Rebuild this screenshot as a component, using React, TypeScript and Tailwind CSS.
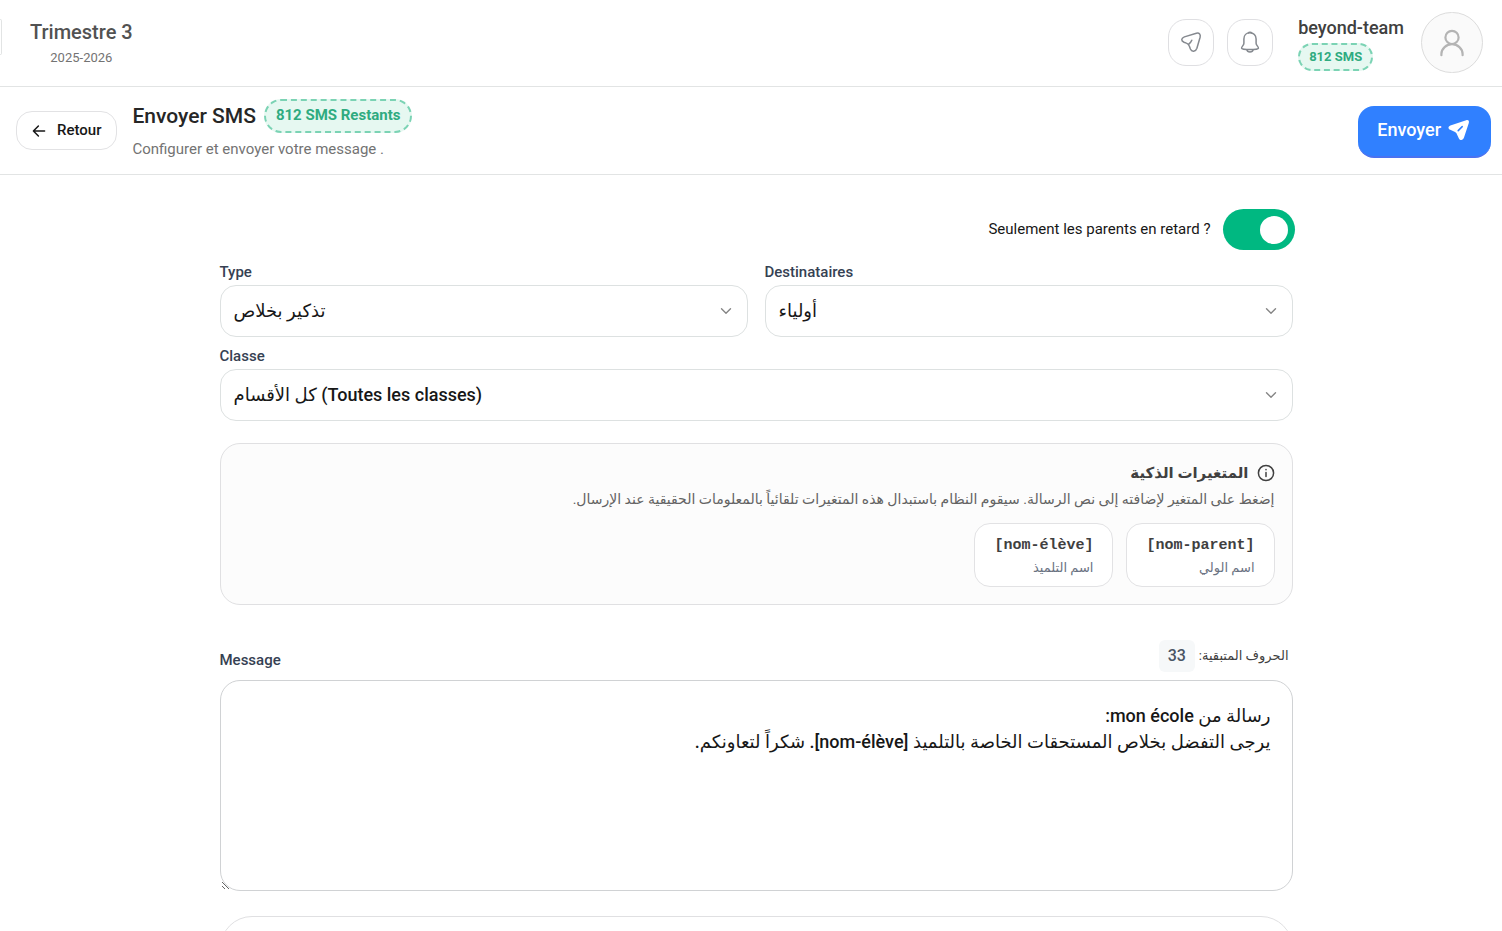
import React, { useState } from "react";

const PLANE_OUTLINE =
  "M17.9 17.2L21.1 6.2C21.8 3.3 20.4 1.7 17.4 2.2L5.4 5.9C2 7.2 1.9 9.8 5 11.2L7.4 12.1C8.9 12.6 9.8 13.5 10.3 15L11.4 18C12.8 21.2 16.7 20.8 17.9 17.2Z";

const PLANE_SOLID =
  "M17 19.6L21.8 5C22.4 2.8 21.4 1.7 19.2 2.2L3.4 7.4C0.9 8.4 0.9 10.6 3.2 11.8L7.6 13.8C8.8 14.3 9.4 15 9.9 16.2L11.9 20.4C13.2 22.9 16.1 22.5 17 19.6Z";

function PlaneOutline() {
  return (
    <svg viewBox="0 0 24 24" className="size-6" fill="none" stroke="currentColor" strokeWidth="1.5" strokeLinecap="round" strokeLinejoin="round" aria-hidden="true">
      <path d={PLANE_OUTLINE} />
      <path d="M9.7 13.2C10.6 12.4 12 11.2 12.8 9.2" />
    </svg>
  );
}

function PlaneSolid() {
  return (
    <svg viewBox="0 0 24 24" className="size-6" aria-hidden="true">
      <path d={PLANE_SOLID} fill="currentColor" />
      <path d="M11.2 12.6L15.2 8.6" stroke="#3080ff" strokeWidth="1.5" strokeLinecap="round" />
    </svg>
  );
}

function BellIcon() {
  return (
    <svg viewBox="0 0 24 24" className="size-6" fill="none" stroke="currentColor" strokeWidth="1.5" strokeLinecap="round" strokeLinejoin="round" aria-hidden="true">
      <path d="M12 1.8C8.4 1.8 5.9 4.5 5.9 8V12.2C5.9 13.2 5.3 14.1 4.7 14.9C4 15.8 3.4 16.6 3.6 17.2C3.8 18 4.8 18.5 12 18.5S20.2 18 20.4 17.2C20.6 16.6 20 15.8 19.3 14.9C18.7 14.1 18.1 13.2 18.1 12.2V8C18.1 4.5 15.6 1.8 12 1.8Z" />
      <path d="M10.6 1.9C10.8 0.9 13.2 0.9 13.4 1.9" />
      <path d="M8.8 18.7C9.4 21.8 14.6 21.8 15.2 18.7" />
    </svg>
  );
}

function UserIcon() {
  return (
    <svg viewBox="0 0 30 30" className="size-[30px]" fill="none" stroke="currentColor" strokeWidth="2.2" strokeLinecap="round" aria-hidden="true">
      <circle cx="15" cy="9.4" r="6.6" />
      <path d="M4.4 27.2V26C4.4 20.6 9.4 16.2 15 16.2S25.6 20.6 25.6 26V27.2" />
    </svg>
  );
}

function BackArrow() {
  return (
    <svg viewBox="0 0 16 16" className="size-4" fill="none" stroke="currentColor" strokeWidth="1.5" strokeLinecap="round" strokeLinejoin="round" aria-hidden="true">
      <path d="M13.6 8H2.4M7.4 3L2.4 8L7.4 13" />
    </svg>
  );
}

function InfoIcon() {
  return (
    <svg viewBox="0 0 18 18" className="size-[18px]" fill="none" stroke="currentColor" strokeWidth="1.5" strokeLinecap="round" aria-hidden="true">
      <circle cx="9" cy="9" r="7.6" />
      <path d="M9 8.4V12.6M9 5.6V5.7" />
    </svg>
  );
}

function Chevron() {
  return (
    <svg viewBox="0 0 12 12" className="pointer-events-none absolute top-1/2 right-4 size-3 -translate-y-1/2 text-[#858585]" fill="none" stroke="currentColor" strokeWidth="1.4" strokeLinecap="round" strokeLinejoin="round" aria-hidden="true">
      <path d="M1.5 3.8L6 8.3L10.5 3.8" />
    </svg>
  );
}

function SelectField({ id, label, option }: { id: string; label: string; option: string }) {
  return (
    <div className="flex flex-col">
      <label htmlFor={id} className="pt-[3px] pb-px text-[15px] leading-6 font-medium text-[#364153]">
        {label}
      </label>
      <div className="relative">
        <select
          id={id}
          className="h-[52px] w-full appearance-none rounded-2xl border border-[#dde1e1] bg-white px-[13px] text-lg font-medium text-[#171717]"
        >
          <option>{option}</option>
        </select>
        <Chevron />
      </div>
    </div>
  );
}

function VariableButton({ code, name }: { code: string; name: string }) {
  return (
    <button type="button" className="flex h-16 flex-col items-start justify-center rounded-2xl border border-[#e2e2e4] bg-white px-[19px] pt-0.5">
      <span dir="ltr" className="font-['Liberation_Mono',monospace] text-[15px] leading-6 font-bold text-[#404040]">
        {code}
      </span>
      <span className="text-[13px] leading-5 text-[#6a7282]">{name}</span>
    </button>
  );
}

export default function App() {
  const [lateOnly, setLateOnly] = useState(true);
  const [message, setMessage] = useState(
    "رسالة من mon école:\nيرجى التفضل بخلاص المستحقات الخاصة بالتلميذ [nom-élève]. شكراً لتعاونكم."
  );

  return (
    <div className="h-screen overflow-hidden bg-white font-[Roboto,'DejaVu_Sans',sans-serif] text-[#171717]">
      <header className="flex h-[87px] items-center justify-between border-b border-[#e2e4e4] pr-[19px] pb-px">
        <div className="flex items-center gap-7">
          <div className="-mt-3 h-9 w-0.5 rounded-r-md border-y border-r border-[#e2e4e4]" />
          <div className="flex flex-col items-center pt-0.5">
            <span className="text-xl leading-7 font-medium text-[#525252]">Trimestre 3</span>
            <span className="text-[13px] leading-6 text-[#737373]">2025-2026</span>
          </div>
        </div>
        <div className="flex items-center">
          <div className="flex gap-[13px] text-[#85898f]">
            <button type="button" aria-label="Messages" className="flex h-[47px] w-[46px] items-center justify-center rounded-[18px] border border-[#dfdfe2]">
              <PlaneOutline />
            </button>
            <button type="button" aria-label="Notifications" className="flex h-[47px] w-[46px] items-center justify-center rounded-[18px] border border-[#dfdfe2]">
              <BellIcon />
            </button>
          </div>
          <div className="ml-[25px] flex flex-col items-start gap-[3px] pt-0.5">
            <span className="text-lg leading-6 font-medium text-[#404040]">beyond-team</span>
            <span className="rounded-full border-2 border-dashed border-[#7bd3b4] bg-[#e6f8f1] px-[9px] text-[13px] leading-6 font-bold text-[#2fab80]">
              812 SMS
            </span>
          </div>
          <button type="button" aria-label="Profil" className="ml-[17px] flex h-[61px] w-[62px] items-center justify-center rounded-full border border-[#dcdcdc] bg-[#fafafa] text-[#b4b4b4]">
            <UserIcon />
          </button>
        </div>
      </header>

      <section className="flex h-[88px] items-center justify-between border-b border-[#e2e4e4] pr-[11px] pl-4">
        <div className="flex items-center gap-[15px]">
          <button type="button" className="flex h-[39px] items-center gap-2.5 rounded-2xl border border-[#e2e2e4] pr-[15px] pl-3.5 text-[15px] font-medium">
            <BackArrow />
            Retour
          </button>
          <div className="flex flex-col gap-1 pb-0.5">
            <div className="flex items-center gap-2">
              <h1 className="text-[21px] leading-8 font-medium text-[#262626]">Envoyer SMS</h1>
              <span className="rounded-full border-2 border-dashed border-[#7bd3b4] bg-[#e6f8f1] px-2.5 pb-0.5 text-[15px] leading-7 font-bold text-[#2fab80]">
                812 SMS Restants
              </span>
            </div>
            <p className="text-[15px] leading-6 text-[#737373]">Configurer et envoyer votre message .</p>
          </div>
        </div>
        <button type="button" className="mt-0.5 flex h-[52px] items-center gap-1.5 rounded-2xl border-b-2 border-[#4a72f0] bg-[#3080ff] pr-5 pb-0.5 pl-[19px] text-lg font-medium text-white">
          Envoyer
          <PlaneSolid />
        </button>
      </section>

      <main className="px-3 pt-[34px] pl-[22px]">
        <div className="mx-auto max-w-[1073px]">
          <div className="flex justify-end">
            <label className="flex items-center gap-3 text-[15px]">
              Seulement les parents en retard ?
              <input type="checkbox" className="peer sr-only" checked={lateOnly} onChange={(e) => setLateOnly(e.target.checked)} />
              <span className="-mr-0.5 flex h-[41px] w-[72px] items-center rounded-full bg-[#d4d4d4] px-[7px] peer-checked:justify-end peer-checked:bg-[#00b881]">
                <span className="size-7 rounded-full bg-white" />
              </span>
            </label>
          </div>

          <div className="mt-[7px] grid grid-cols-2 gap-x-[17px] gap-y-1">
            <SelectField id="type" label="Type" option="تذكير بخلاص" />
            <SelectField id="dest" label="Destinataires" option="أولياء" />
            <div className="col-span-2">
              <SelectField id="classe" label="Classe" option="كل الأقسام (Toutes les classes)" />
            </div>
          </div>

          <section dir="rtl" className="mt-[22px] rounded-[20px] border border-[#e0e0e2] bg-[#fcfcfc] px-[17px] pt-[17px] pb-[17px]">
            <h2 className="flex items-center gap-2 text-[15px] leading-6 font-bold text-[#404040]">
              <InfoIcon />
              المتغيرات الذكية
            </h2>
            <p className="mt-0.5 text-sm leading-6 text-[#636363]">
              إضغط على المتغير لإضافته إلى نص الرسالة. سيقوم النظام باستبدال هذه المتغيرات تلقائياً بالمعلومات الحقيقية عند الإرسال.
            </p>
            <div className="mt-3 flex gap-[13px]">
              <VariableButton code="[nom-parent]" name="اسم الولي" />
              <VariableButton code="[nom-élève]" name="اسم التلميذ" />
            </div>
          </section>

          <div className="mt-[35px] flex items-center justify-between pr-1">
            <label htmlFor="message" className="pt-2 text-[15px] leading-6 font-medium text-[#364153]">
              Message
            </label>
            <div dir="rtl" className="flex items-center gap-1 text-[13px] text-[#404040]">
              <span>الحروف المتبقية:</span>
              <span className="rounded-md bg-[#f6f8f9] px-[9px] text-base leading-8 font-medium text-[#4a5565]">33</span>
            </div>
          </div>
          <textarea
            id="message"
            dir="rtl"
            value={message}
            onChange={(e) => setMessage(e.target.value)}
            className="mt-2 block h-[211px] w-full resize-y rounded-[20px] border border-[#d0d2d4] bg-white px-[21px] py-[22px] text-lg leading-[26px] font-medium text-[#171717]"
          />

          <div className="mt-[25px] h-24 rounded-[32px] border border-[#e0e0e2]" />
        </div>
      </main>
    </div>
  );
}
